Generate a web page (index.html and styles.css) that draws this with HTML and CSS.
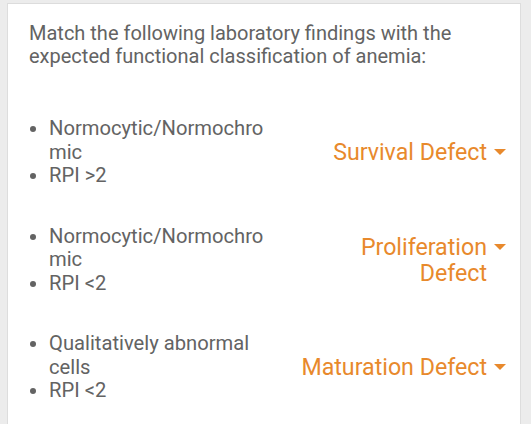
FILE: index.html
```html
<!DOCTYPE html>
<html lang="en">
<head>
<meta charset="utf-8">
<title>Anemia classification</title>
<link rel="stylesheet" href="styles.css">
</head>
<body>
<div class="page">
  <section class="card">
    <p class="prompt">Match the following laboratory findings with the expected functional classification of anemia:</p>
    <div class="pairs">
      <div class="pair">
        <ul class="findings">
          <li>Normocytic/Normochromic</li>
          <li>RPI &gt;2</li>
        </ul>
        <div class="select">
          <span class="select-label">Survival Defect</span>
          <svg class="caret" width="12" height="6" viewBox="0 0 12 6"><path d="M0 0h12L6 6z"/></svg>
        </div>
      </div>
      <div class="pair">
        <ul class="findings">
          <li>Normocytic/Normochromic</li>
          <li>RPI &lt;2</li>
        </ul>
        <div class="select">
          <span class="select-label">Proliferation Defect</span>
          <svg class="caret" width="12" height="6" viewBox="0 0 12 6"><path d="M0 0h12L6 6z"/></svg>
        </div>
      </div>
      <div class="pair">
        <ul class="findings">
          <li>Qualitatively abnormal cells</li>
          <li>RPI &lt;2</li>
        </ul>
        <div class="select">
          <span class="select-label">Maturation Defect</span>
          <svg class="caret" width="12" height="6" viewBox="0 0 12 6"><path d="M0 0h12L6 6z"/></svg>
        </div>
      </div>
    </div>
  </section>
</div>
</body>
</html>
```
FILE: styles.css
```css
html, body {
  margin: 0;
  padding: 0;
}

body {
  background: #ececec;
  font-family: Roboto, "Noto Sans", sans-serif;
  width: 531px;
  height: 424px;
  overflow: hidden;
}

.page {
  padding: 3px 10px 0 8px;
  height: 100%;
  box-sizing: border-box;
}

.card {
  background: #fff;
  border-top: 1px solid #dcdcdc;
  border-left: 1px solid #dddddd;
  border-right: 1px solid #dddddd;
  height: 100%;
  box-sizing: border-box;
  padding: 18px 14px 0 21px;
  margin-left: -1px;
}

.prompt {
  margin: 0;
  font-size: 20px;
  line-height: 23px;
  color: #636363;
}

.pairs {
  display: flex;
  flex-direction: column;
  gap: 37px;
  margin-top: 49px;
}

.pair {
  display: flex;
  align-items: center;
  justify-content: space-between;
}

.findings {
  margin: 0;
  padding-left: 20px;
  width: 220px;
  font-size: 20.2px;
  line-height: 23.5px;
  color: #636363;
  overflow-wrap: anywhere;
}

.select {
  display: flex;
  align-items: flex-start;
  gap: 7px;
  color: #e8892c;
}

.select-label {
  max-width: 190px;
  text-align: right;
  font-size: 23.2px;
  line-height: 26px;
}

.caret {
  flex: none;
  margin-top: 10px;
  fill: #e8892c;
}
```
